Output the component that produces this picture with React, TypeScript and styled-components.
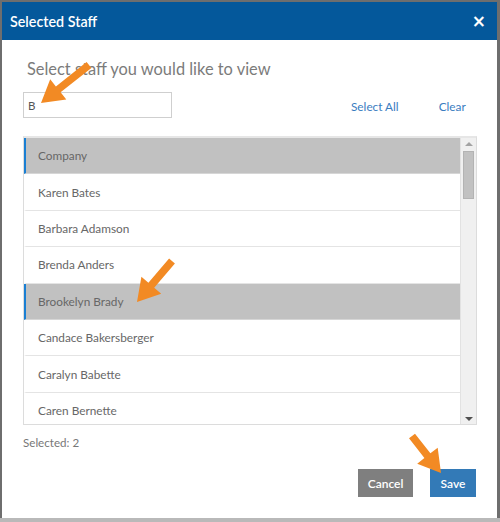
import React, { useState } from 'react';
import styled, { createGlobalStyle } from 'styled-components';

const GlobalStyle = createGlobalStyle`
  html, body {
    margin: 0;
    padding: 0;
    background: #6e6e6e;
    font-family: Lato, "Open Sans", "Liberation Sans", sans-serif;
  }
  * { box-sizing: border-box; }
`;

const Backdrop = styled.div`
  position: relative;
  width: 500px;
  height: 522px;
  padding: 2px 3px 4px 2px;
  background: linear-gradient(to bottom, #6e6e6e 0, #6e6e6e 518px, #b9b9b9 518px);
  overflow: hidden;
`;

const Modal = styled.div`
  width: 495px;
  height: 516px;
  background: #fff;
  display: flex;
  flex-direction: column;
`;

const Header = styled.div`
  height: 38px;
  background: #04589b;
  display: flex;
  align-items: center;
  justify-content: space-between;
  padding: 0 11px 0 8px;
  color: #fff;
`;

const Title = styled.h1`
  margin: 0;
  font-size: 14.3px;
  font-weight: 600;
`;

const CloseButton = styled.button`
  border: none;
  background: none;
  color: #fff;
  font-size: 17px;
  font-weight: 700;
  line-height: 1;
  padding: 0;
  cursor: pointer;
  font-family: "DejaVu Sans", sans-serif;
`;

const Body = styled.div`
  flex: 1;
  display: flex;
  flex-direction: column;
  padding: 17px 20px 21px 21px;
`;

const Heading = styled.h2`
  margin: 0 0 0 4px;
  font-size: 16.4px;
  line-height: 24px;
  font-weight: 400;
  color: #7b7b7b;
`;

const Toolbar = styled.div`
  display: flex;
  align-items: center;
  margin-top: 11px;
  height: 26px;
`;

const SearchInput = styled.input`
  width: 149px;
  height: 26px;
  border: 1px solid #cfcfcf;
  padding: 0 4px;
  font-family: inherit;
  font-size: 11.5px;
  color: #555;
  outline: none;
`;

const LinkButton = styled.button<{ $gap: number }>`
  border: none;
  background: none;
  padding: 0;
  margin-left: ${(p) => p.$gap}px;
  font-family: inherit;
  font-size: 11.8px;
  color: #3a7cbf;
  cursor: pointer;
  margin-top: 2px;
`;

const List = styled.div`
  margin-top: 18px;
  height: 289px;
  border: 1px solid #dcdcdc;
  border-top-width: 2px;
  border-top-color: #e6e6e6;
  display: flex;
`;

const Rows = styled.div`
  flex: 1;
  overflow: hidden;
`;

const Row = styled.div<{ $selected: boolean }>`
  height: 36.4px;
  display: flex;
  align-items: center;
  padding-left: 12px;
  font-size: 11.8px;
  color: #676767;
  border-left: 2px solid ${(p) => (p.$selected ? '#1a7fd3' : 'transparent')};
  border-bottom: 1px solid ${(p) => (p.$selected ? '#d6d6d6' : '#e4e4e4')};
  background: ${(p) => (p.$selected ? '#c1c1c1' : '#fff')};
  cursor: pointer;
`;

const Scrollbar = styled.div`
  width: 16px;
  background: #f0f0f0;
  border-left: 1px solid #e2e2e2;
  display: flex;
  flex-direction: column;
  align-items: center;
  padding: 4px 0 3px;
`;

const ScrollArrow = styled.div<{ $down?: boolean }>`
  width: 0;
  height: 0;
  border-left: 4px solid transparent;
  border-right: 4px solid transparent;
  ${(p) =>
    p.$down
      ? 'border-top: 4px solid #505050; margin-top: auto;'
      : 'border-bottom: 4px solid #a3a3a3;'}
`;

const Thumb = styled.div`
  width: 11px;
  height: 48px;
  margin-top: 5px;
  background: #c1c1c1;
  border: 1px solid #b3b3b3;
`;

const Count = styled.div`
  margin-top: 11px;
  font-size: 11.6px;
  color: #777;
`;

const Footer = styled.div`
  margin-top: auto;
  display: flex;
  justify-content: flex-end;
  gap: 17px;
  padding-right: 1px;
`;

const ActionButton = styled.button<{ $primary?: boolean }>`
  height: 28px;
  width: ${(p) => (p.$primary ? 46 : 55)}px;
  padding: 0;
  border: none;
  background: ${(p) => (p.$primary ? '#337ab7' : '#7f7f7f')};
  color: #fff;
  font-family: inherit;
  font-size: 12px;
  font-weight: 600;
  cursor: pointer;
`;

const Annotations = styled.svg`
  position: absolute;
  left: 0;
  top: 0;
  pointer-events: none;
`;

const staff = [
  'Company',
  'Karen Bates',
  'Barbara Adamson',
  'Brenda Anders',
  'Brookelyn Brady',
  'Candace Bakersberger',
  'Caralyn Babette',
  'Caren Bernette',
];

// arrow from tail (x1,y1) to tip (x2,y2)
const arrowPath = (x1: number, y1: number, x2: number, y2: number) => {
  const dx = x2 - x1;
  const dy = y2 - y1;
  const len = Math.hypot(dx, dy);
  const ux = dx / len;
  const uy = dy / len;
  const px = -uy;
  const py = ux;
  const head = 22;
  const hw = 13;
  const sw = 3.8;
  const bx = x2 - ux * head;
  const by = y2 - uy * head;
  const pts = [
    [x1 + px * sw, y1 + py * sw],
    [bx + px * sw, by + py * sw],
    [bx + px * hw, by + py * hw],
    [x2, y2],
    [bx - px * hw, by - py * hw],
    [bx - px * sw, by - py * sw],
    [x1 - px * sw, y1 - py * sw],
  ];
  return 'M' + pts.map((p) => p[0].toFixed(1) + ',' + p[1].toFixed(1)).join(' L') + ' Z';
};

export default function App() {
  const [query, setQuery] = useState('B');
  const [selected, setSelected] = useState<string[]>(['Company', 'Brookelyn Brady']);

  const toggle = (name: string) =>
    setSelected((s) => (s.includes(name) ? s.filter((n) => n !== name) : [...s, name]));

  return (
    <>
      <GlobalStyle />
      <Backdrop>
        <Modal>
          <Header>
            <Title>Selected Staff</Title>
            <CloseButton aria-label="Close">×</CloseButton>
          </Header>
          <Body>
            <Heading>Select staff you would like to view</Heading>
            <Toolbar>
              <SearchInput value={query} onChange={(e) => setQuery(e.target.value)} />
              <LinkButton $gap={179} onClick={() => setSelected(staff)}>
                Select All
              </LinkButton>
              <LinkButton $gap={40} onClick={() => setSelected([])}>
                Clear
              </LinkButton>
            </Toolbar>
            <List>
              <Rows>
                {staff.map((name) => (
                  <Row key={name} $selected={selected.includes(name)} onClick={() => toggle(name)}>
                    {name}
                  </Row>
                ))}
              </Rows>
              <Scrollbar>
                <ScrollArrow />
                <Thumb />
                <ScrollArrow $down />
              </Scrollbar>
            </List>
            <Count>Selected: {selected.length}</Count>
            <Footer>
              <ActionButton>Cancel</ActionButton>
              <ActionButton $primary>Save</ActionButton>
            </Footer>
          </Body>
        </Modal>
        <Annotations width="500" height="522" viewBox="0 0 500 522">
          <g fill="#f28a24">
            <path d={arrowPath(89, 65, 41, 103)} />
            <path d={arrowPath(172, 261, 137, 302)} />
            <path d={arrowPath(412, 436, 441, 473)} />
          </g>
        </Annotations>
      </Backdrop>
    </>
  );
}
